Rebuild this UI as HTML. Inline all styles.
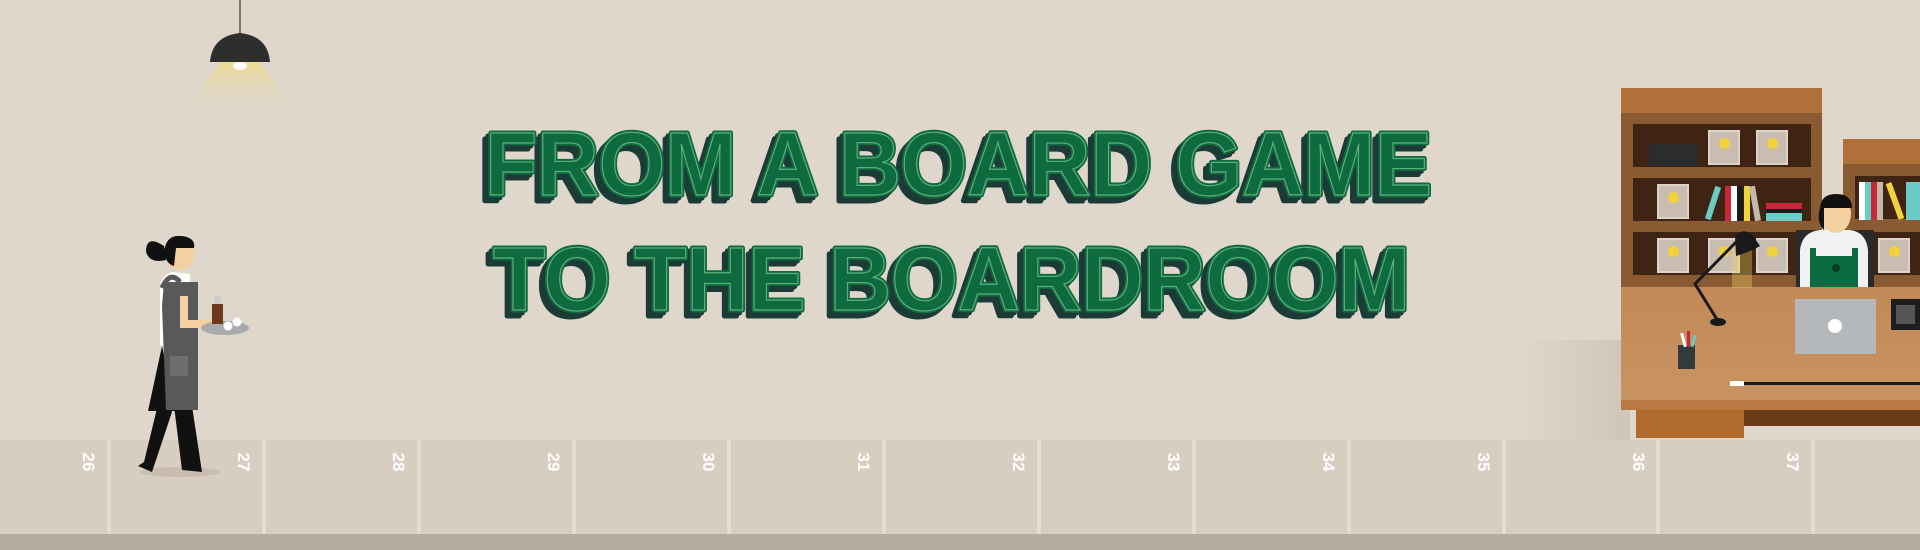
<!DOCTYPE html>
<html><head><meta charset="utf-8"><style>
html,body{margin:0;padding:0}
body{width:1920px;height:550px;position:relative;overflow:hidden;background:#dfd7cb;font-family:"Liberation Sans",sans-serif}
.a{position:absolute}
.sep{position:absolute;top:440px;height:94px;width:4px;background:#e6dcd2}
.num{position:absolute;top:452px;color:#fff;font-weight:bold;font-size:17px;transform:rotate(90deg);transform-origin:center;width:24px;text-align:center}
.frame{position:absolute;width:32px;height:35px;background:#c9bcb0;border:2px solid #ddd3c9;box-sizing:border-box}
.frame:after{content:"";position:absolute;left:9px;top:6px;width:11px;height:11px;border-radius:50%;background:#f2d23c}
</style></head><body>
<div class="a" style="left:0;top:440px;width:1920px;height:94px;background:#d8cdc1"></div>
<div class="a" style="left:0;top:534px;width:1920px;height:16px;background:#b5ada1"></div>
<div class="sep" style="left:107px"></div><div class="sep" style="left:262px"></div><div class="sep" style="left:417px"></div><div class="sep" style="left:572px"></div><div class="sep" style="left:727px"></div><div class="sep" style="left:882px"></div><div class="sep" style="left:1037px"></div><div class="sep" style="left:1192px"></div><div class="sep" style="left:1347px"></div><div class="sep" style="left:1502px"></div><div class="sep" style="left:1656px"></div><div class="sep" style="left:1811px"></div>
<div class="num" style="left:76px">26</div><div class="num" style="left:231px">27</div><div class="num" style="left:386px">28</div><div class="num" style="left:541px">29</div><div class="num" style="left:696px">30</div><div class="num" style="left:851px">31</div><div class="num" style="left:1006px">32</div><div class="num" style="left:1161px">33</div><div class="num" style="left:1316px">34</div><div class="num" style="left:1471px">35</div><div class="num" style="left:1626px">36</div><div class="num" style="left:1780px">37</div>

<svg class="a" style="left:160px;top:0" width="160" height="130">
<defs><linearGradient id="cone" x1="0" y1="0" x2="0" y2="1"><stop offset="0" stop-color="#f0dc8a" stop-opacity=".9"/><stop offset="1" stop-color="#dfd7cb" stop-opacity="0"/></linearGradient></defs>
<polygon points="62,60 98,60 140,118 20,118" fill="url(#cone)"/>
<line x1="80" y1="0" x2="80" y2="34" stroke="#555" stroke-width="1.5"/>
<path d="M50,62 Q52,36 80,33 Q108,36 110,62 Z" fill="#2e2e2e"/>
<ellipse cx="80" cy="66" rx="7" ry="4" fill="#fff"/>
</svg>

<svg class="a" style="left:130px;top:236px" width="130" height="250">
<ellipse cx="50" cy="236" rx="40" ry="5" fill="#bfb2a5" opacity=".6"/>
<path d="M30,160 L14,226 L8,230 L22,236 L42,176Z" fill="#111"/>
<path d="M44,170 L52,234 L72,236 L62,170Z" fill="#111"/>
<path d="M32,110 L18,175 L46,175Z" fill="#111"/>
<path d="M30,52 Q30,40 42,36 L60,38 L60,110 L30,110Z" fill="#fff"/>
<path d="M34,46 L68,46 L68,174 L36,174 L32,70Z" fill="#58595b"/>
<path d="M32,52 Q40,34 50,46" stroke="#58595b" stroke-width="5" fill="none"/>
<rect x="40" y="120" width="18" height="20" fill="#6d6e70"/>
<path d="M50,60 L50,92 L82,92 L82,84 L58,84 L58,60Z" fill="#f3cfa2"/>
<ellipse cx="95" cy="92" rx="24" ry="7" fill="#a9aaac"/>
<rect x="82" y="68" width="11" height="20" fill="#6b3a1e"/><rect x="84" y="60" width="7" height="8" fill="#ccc"/>
<circle cx="98" cy="90" r="4.5" fill="#fff"/><circle cx="107" cy="86" r="4.5" fill="#fff"/>
<ellipse cx="50" cy="16" rx="15" ry="18" fill="#f3cfa2"/>
<path d="M34,16 Q36,-2 52,0 Q66,2 64,12 L46,12 L44,30 Q36,28 34,16Z" fill="#111"/>
<path d="M34,10 Q16,-2 16,16 Q20,28 36,24Z" fill="#111"/>
</svg>

<svg class="a" style="left:0;top:0" width="1920" height="400" font-family="Liberation Sans, sans-serif" font-weight="bold" font-size="90">
<g fill="#1c3b36" stroke="#1c3b36" stroke-width="5" stroke-linejoin="round">
<text x="479" y="201" textLength="947" lengthAdjust="spacingAndGlyphs">FROM A BOARD GAME</text>
<text x="482" y="198" textLength="947" lengthAdjust="spacingAndGlyphs">FROM A BOARD GAME</text>
<text x="487" y="316" textLength="917" lengthAdjust="spacingAndGlyphs">TO THE BOARDROOM</text>
<text x="490" y="313" textLength="917" lengthAdjust="spacingAndGlyphs">TO THE BOARDROOM</text>
</g>
<g fill="#0e6b3f" stroke="#0e6b3f" stroke-width="5" stroke-linejoin="round">
<text x="485" y="195" textLength="947" lengthAdjust="spacingAndGlyphs">FROM A BOARD GAME</text>
<text x="493" y="310" textLength="917" lengthAdjust="spacingAndGlyphs">TO THE BOARDROOM</text>
</g>
<g fill="none" stroke="#5fae7c" stroke-width="1.2">
<text x="485" y="195" textLength="947" lengthAdjust="spacingAndGlyphs">FROM A BOARD GAME</text>
<text x="493" y="310" textLength="917" lengthAdjust="spacingAndGlyphs">TO THE BOARDROOM</text>
</g>
</svg>

<div class="a" style="left:1520px;top:340px;width:110px;height:100px;background:linear-gradient(90deg,rgba(200,190,178,0),rgba(200,190,178,.7))"></div>
<div class="a" style="left:1621px;top:88px;width:201px;height:200px;background:#8a5a32"></div>
<div class="a" style="left:1621px;top:88px;width:201px;height:25px;background:#b0703a"></div>
<div class="a" style="left:1633px;top:124px;width:178px;height:43px;background:#3f2413"></div>
<div class="a" style="left:1633px;top:178px;width:178px;height:43px;background:#3f2413"></div>
<div class="a" style="left:1633px;top:232px;width:178px;height:43px;background:#3f2413"></div>
<div class="a" style="left:1649px;top:144px;width:49px;height:22px;background:#2b2c2e"></div>
<div class="frame" style="left:1708px;top:130px"></div><div class="frame" style="left:1756px;top:130px"></div>
<div class="frame" style="left:1657px;top:184px"></div>
<div class="frame" style="left:1657px;top:238px"></div><div class="frame" style="left:1708px;top:238px"></div><div class="frame" style="left:1756px;top:238px"></div>
<div class="a" style="left:1710px;top:186px;width:6px;height:34px;background:#6ccbc6;transform:rotate(18deg)"></div>
<div class="a" style="left:1725px;top:186px;width:6px;height:35px;background:#c9283a"></div>
<div class="a" style="left:1731px;top:186px;width:6px;height:35px;background:#fff"></div>
<div class="a" style="left:1737px;top:186px;width:6px;height:35px;background:#1b1b1b"></div>
<div class="a" style="left:1744px;top:186px;width:6px;height:35px;background:#f1d33b"></div>
<div class="a" style="left:1752px;top:186px;width:6px;height:35px;background:#c5b8ab;transform:rotate(-10deg)"></div>
<div class="a" style="left:1766px;top:203px;width:36px;height:6px;background:#c9283a"></div>
<div class="a" style="left:1766px;top:209px;width:36px;height:4px;background:#1b1b1b"></div>
<div class="a" style="left:1766px;top:213px;width:36px;height:8px;background:#6ccbc6"></div>
<div class="a" style="left:1843px;top:139px;width:77px;height:150px;background:#8a5a32"></div>
<div class="a" style="left:1843px;top:139px;width:77px;height:25px;background:#b0703a"></div>
<div class="a" style="left:1855px;top:176px;width:65px;height:43px;background:#3f2413"></div>
<div class="a" style="left:1855px;top:232px;width:65px;height:43px;background:#3f2413"></div>
<div class="a" style="left:1859px;top:182px;width:6px;height:38px;background:#fff"></div>
<div class="a" style="left:1865px;top:182px;width:6px;height:38px;background:#6ccbc6"></div>
<div class="a" style="left:1871px;top:182px;width:6px;height:38px;background:#c9283a"></div>
<div class="a" style="left:1877px;top:182px;width:6px;height:38px;background:#c5b8ab"></div>
<div class="a" style="left:1892px;top:182px;width:6px;height:38px;background:#f1d33b;transform:rotate(-20deg)"></div>
<div class="a" style="left:1906px;top:182px;width:14px;height:38px;background:#6ccbc6"></div>
<div class="frame" style="left:1878px;top:238px"></div>
<svg class="a" style="left:1790px;top:188px" width="90" height="100">
<rect x="6" y="42" width="78" height="58" fill="#2a2a2a"/>
<path d="M10,100 L10,62 Q12,44 30,42 L60,42 Q76,44 78,62 L78,100Z" fill="#f1f1f1"/>
<path d="M20,100 L20,60 L26,60 L26,68 L62,68 L62,60 L68,60 L68,100Z" fill="#0a6a40"/>
<circle cx="46" cy="80" r="4" fill="#0b3b24"/>
<ellipse cx="46" cy="26" rx="15" ry="19" fill="#f3cfa2"/>
<path d="M30,22 Q30,6 46,6 Q62,6 62,20 L30,20Z" fill="#111"/>
<path d="M30,20 Q26,34 34,42 L34,20Z" fill="#111"/>
</svg>
<div class="a" style="left:1621px;top:287px;width:299px;height:123px;background:linear-gradient(180deg,#c18a57,#c99463)"></div>
<div class="a" style="left:1621px;top:400px;width:299px;height:10px;background:#b87a42"></div>
<div class="a" style="left:1636px;top:410px;width:108px;height:28px;background:#b06a2e"></div>
<div class="a" style="left:1744px;top:410px;width:176px;height:16px;background:#6b3b17"></div>
<div class="a" style="left:1795px;top:299px;width:81px;height:55px;background:#b5b8ba"></div>
<div class="a" style="left:1828px;top:319px;width:14px;height:14px;border-radius:50%;background:#fff"></div>
<div class="a" style="left:1891px;top:299px;width:29px;height:31px;background:#1d1d1d"></div>
<div class="a" style="left:1896px;top:305px;width:19px;height:19px;background:#555"></div>
<div class="a" style="left:1730px;top:381px;width:14px;height:5px;background:#fff"></div>
<div class="a" style="left:1744px;top:382px;width:176px;height:3px;background:#1d1d1d"></div>
<div class="a" style="left:1678px;top:345px;width:17px;height:24px;background:#333a3c"></div>
<div class="a" style="left:1682px;top:333px;width:3px;height:14px;background:#fff;transform:rotate(-15deg)"></div>
<div class="a" style="left:1687px;top:331px;width:3px;height:16px;background:#c9283a"></div>
<div class="a" style="left:1692px;top:335px;width:3px;height:12px;background:#6ccbc6;transform:rotate(15deg)"></div>
<svg class="a" style="left:1680px;top:228px" width="90" height="100">
<polygon points="52,14 72,14 72,60 52,60" fill="#f0d860" opacity=".35"/>
<polyline points="60,10 15,56 38,93" stroke="#1a1a1a" stroke-width="3" fill="none"/>
<ellipse cx="38" cy="94" rx="8" ry="4" fill="#1a1a1a"/>
<path d="M55,8 Q62,0 72,6 L80,18 Q70,24 56,28Z" fill="#1a1a1a"/>
</svg>
</body></html>
